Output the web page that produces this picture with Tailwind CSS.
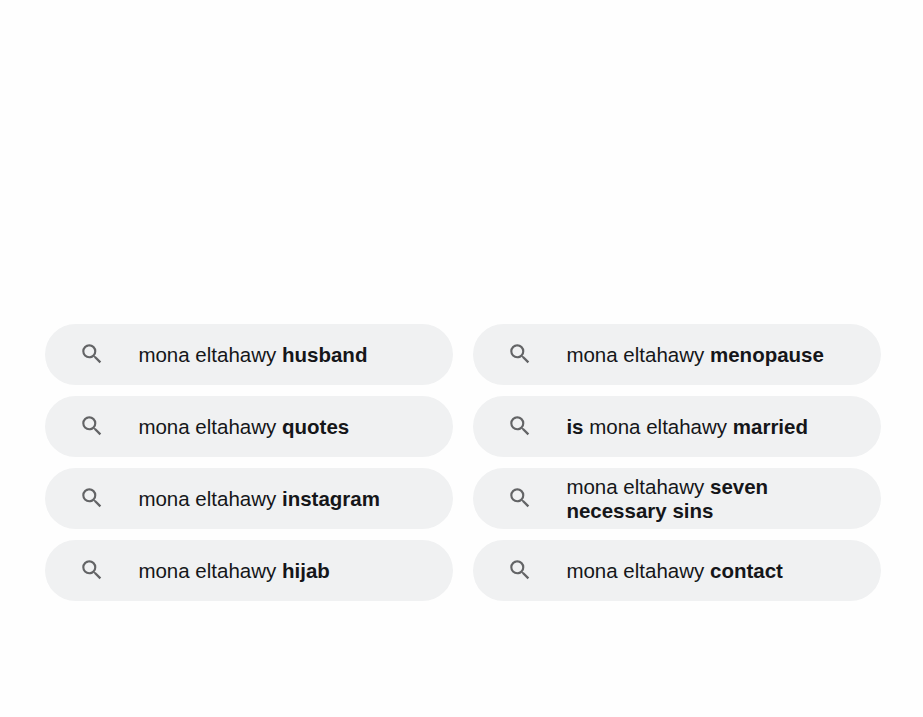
<!DOCTYPE html>
<html lang="en">

<head>
    <meta charset="UTF-8">
    <meta name="viewport" content="width=device-width, initial-scale=1.0">
    <title>Related searches</title>
    <script src="https://cdn.jsdelivr.net/npm/@tailwindcss/browser@4"></script>
</head>

<body class="bg-[#fefefe] text-[#151619]" style='font-family: "Liberation Sans", Arial, sans-serif;'>
    <svg class="hidden">
        <symbol id="search" viewBox="0 0 24 24">
            <path d="M15.5 14h-.79l-.28-.27A6.471 6.471 0 0 0 16 9.5 6.5 6.5 0 1 0 9.5 16c1.61 0 3.09-.59 4.23-1.57l.27.28v.79l5 4.99L20.49 19l-4.99-5zm-6 0C7.01 14 5 11.99 5 9.5S7.01 5 9.5 5 14 7.01 14 9.5 11.99 14 9.5 14z" />
        </symbol>
    </svg>

    <main class="pt-[324px] pl-[45px]">
        <div class="grid grid-cols-[408px_408px] auto-rows-[61px] gap-x-5 gap-y-[11px] text-[20.5px] leading-6">
            <a class="flex items-center rounded-full bg-[#f0f1f2] pl-[34px]">
                <svg class="mb-px size-[26px] shrink-0 fill-[#636466]"><use href="#search" /></svg>
                <span class="ml-[33.4px]">mona eltahawy <b>husband</b></span>
            </a>
            <a class="flex items-center rounded-full bg-[#f0f1f2] pl-[34px]">
                <svg class="mb-px size-[26px] shrink-0 fill-[#636466]"><use href="#search" /></svg>
                <span class="ml-[33.4px]">mona eltahawy <b>menopause</b></span>
            </a>
            <a class="flex items-center rounded-full bg-[#f0f1f2] pl-[34px]">
                <svg class="mb-px size-[26px] shrink-0 fill-[#636466]"><use href="#search" /></svg>
                <span class="ml-[33.4px]">mona eltahawy <b>quotes</b></span>
            </a>
            <a class="flex items-center rounded-full bg-[#f0f1f2] pl-[34px]">
                <svg class="mb-px size-[26px] shrink-0 fill-[#636466]"><use href="#search" /></svg>
                <span class="ml-[33.4px]"><b>is</b> mona eltahawy <b>married</b></span>
            </a>
            <a class="flex items-center rounded-full bg-[#f0f1f2] pl-[34px]">
                <svg class="mb-px size-[26px] shrink-0 fill-[#636466]"><use href="#search" /></svg>
                <span class="ml-[33.4px]">mona eltahawy <b>instagram</b></span>
            </a>
            <a class="flex items-center rounded-full bg-[#f0f1f2] pl-[34px]">
                <svg class="mb-px size-[26px] shrink-0 fill-[#636466]"><use href="#search" /></svg>
                <span class="ml-[33.4px]">mona eltahawy <b>seven</b><br><b>necessary sins</b></span>
            </a>
            <a class="flex items-center rounded-full bg-[#f0f1f2] pl-[34px]">
                <svg class="mb-px size-[26px] shrink-0 fill-[#636466]"><use href="#search" /></svg>
                <span class="ml-[33.4px]">mona eltahawy <b>hijab</b></span>
            </a>
            <a class="flex items-center rounded-full bg-[#f0f1f2] pl-[34px]">
                <svg class="mb-px size-[26px] shrink-0 fill-[#636466]"><use href="#search" /></svg>
                <span class="ml-[33.4px]">mona eltahawy <b>contact</b></span>
            </a>
        </div>
    </main>
</body>

</html>
